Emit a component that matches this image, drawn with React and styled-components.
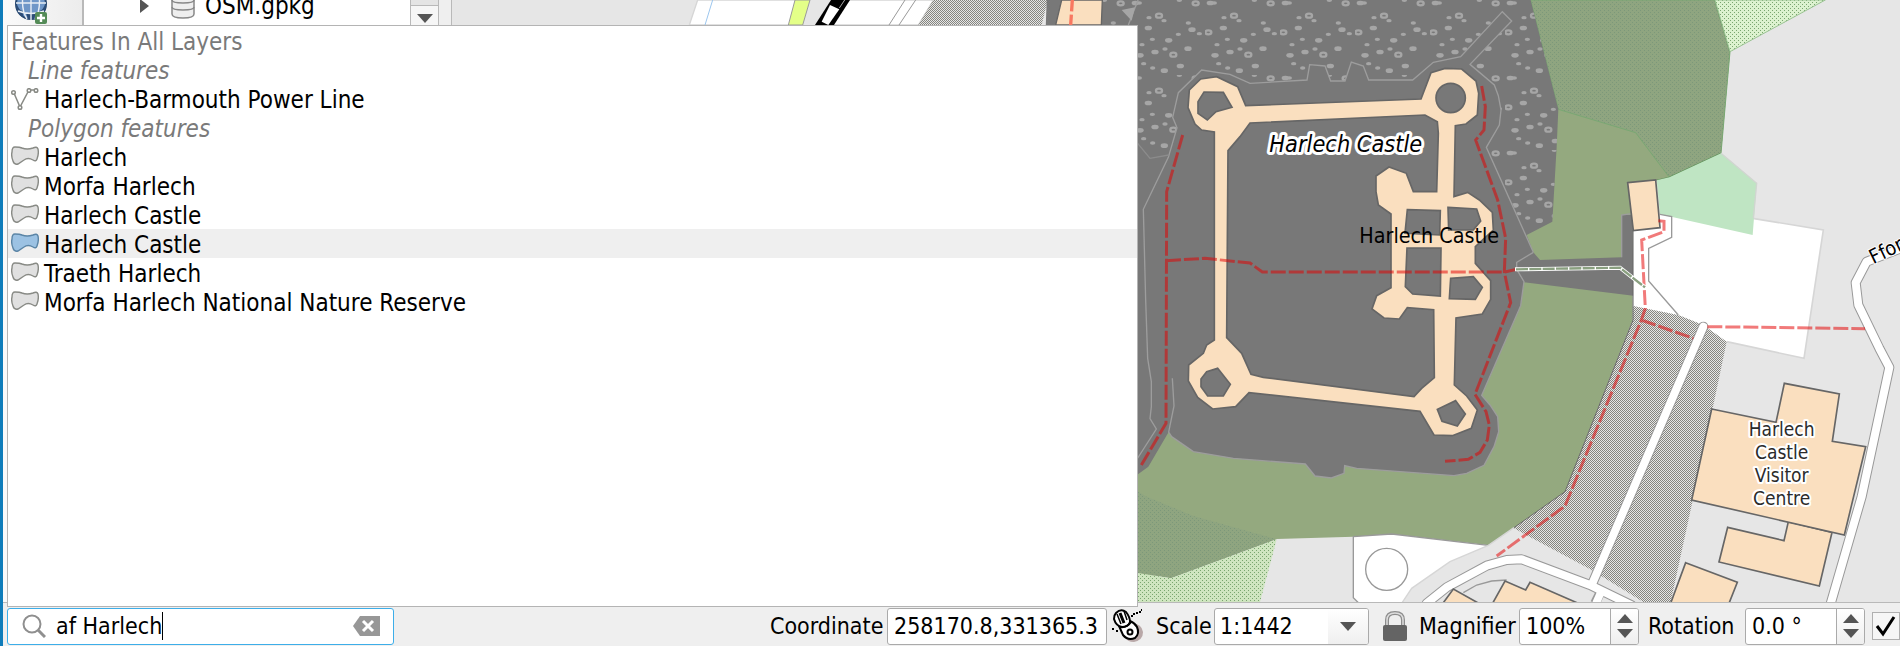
import React from "react";
import styled, { createGlobalStyle, css } from "styled-components";

const GlobalStyle = createGlobalStyle`
  * { box-sizing: border-box; }
  body { margin: 0; background: #efefef; }
  body, button, input, select {
    font-family: "DejaVu Sans Condensed", "DejaVu Sans", sans-serif;
    font-stretch: condensed;
    font-size: 23px;
    color: #000;
  }
`;

const Window = styled.div`
  position: relative;
  display: flex;
  flex-direction: column;
  height: 100vh;
  overflow: hidden;
  border-left: 3px solid #0f7cba;
  background: #efefef;
`;

const Workspace = styled.div`
  display: flex;
  flex: 1;
  min-height: 0;
`;

const ToolStrip = styled.nav`
  flex: 0 0 81px;
  border-right: 2px solid #b9b9b9;
  background: linear-gradient(90deg, #fafafa, #ececec);
  padding-left: 12px;
  overflow: hidden;
`;

const IconButton = styled.button`
  display: flex;
  align-items: center;
  justify-content: center;
  padding: 0;
  border: 0;
  background: none;
`;

const ToolButton = styled(IconButton)`
  width: 34px;
  height: 34px;
  margin-top: -10px;
`;

const LayerTree = styled.section`
  flex: 0 0 326px;
  background: #fff;
  overflow: hidden;
`;

const TreeRow = styled.div`
  display: flex;
  align-items: center;
  gap: 10px;
  height: 32px;
  margin-top: -10px;
  padding-left: 55px;
  font-size: 24px;
`;

const Expander = styled(IconButton)`
  width: 10px;
  height: 14px;
  margin-right: 12px;
`;

const ScrollTrack = styled.div`
  flex: 0 0 29px;
  border: solid #b9b9b9;
  border-width: 0 1px;
  background: #f6f6f6;
`;

const ScrollThumb = styled.div`
  height: 6px;
  border-bottom: 1px solid #b9b9b9;
  background: #e4e4e4;
`;

const ScrollButton = styled(IconButton)`
  width: 100%;
  height: 24px;
`;

const Splitter = styled.div`
  flex: 0 0 13px;
  border-right: 1px solid #b9b9b9;
`;

const MapPane = styled.main`
  flex: 1;
  min-width: 0;
  background: #e6e6e6;
  svg { display: block; width: 100%; height: 100%; }
`;

const Popup = styled.ul`
  position: absolute;
  top: 25px;
  bottom: 39px;
  left: 4px;
  width: calc(60% - 7px);
  margin: 0;
  padding: 0;
  list-style: none;
  border: 1px solid #b4b4b4;
  background: #fff;
  font-size: 24px;
`;

const ResultRow = styled.li`
  display: flex;
  align-items: center;
  gap: 5px;
  height: 29px;
  padding: 2px 0 0 3px;
  white-space: nowrap;
  background: ${(p) => (p.$selected ? "#efefef" : "transparent")};
  ${(p) => p.$kind === "title" && css`color: #7a7a7a;`}
  ${(p) => p.$kind === "group" && css`
    color: #7a7a7a;
    font-style: italic;
    padding-left: 20px;
  `}
`;

const StatusBar = styled.footer`
  display: flex;
  align-items: center;
  flex: 0 0 44px;
  padding: 4px 0 1px 4px;
  border-top: 1px solid #b9b9b9;
  white-space: nowrap;
`;

const Field = styled.div`
  display: flex;
  align-items: center;
  flex: 0 0 ${(p) => p.$width}px;
  height: 37px;
  margin-right: ${(p) => p.$gap || 0}px;
  overflow: hidden;
  border: 1px solid ${(p) => (p.$active ? "#3daee9" : "#aaa")};
  border-radius: 3px;
  background: #fff;
`;

const TextInput = styled.input`
  flex: 1;
  min-width: 0;
  height: 100%;
  padding: 0 0 0 6px;
  border: 0;
  outline: 0;
  background: none;
`;

const SearchInput = styled(TextInput)`
  flex: 0 1 auto;
  field-sizing: content;
  padding: 0;
  margin-left: 10px;
  caret-color: transparent;
`;

const Caret = styled.span`
  width: 1px;
  height: 28px;
  background: #000;
`;

const SearchIcon = styled.svg`
  flex: 0 0 24px;
  margin-left: 14px;
`;

const ClearButton = styled(IconButton)`
  margin: 0 13px 0 auto;
`;

const Spacer = styled.div`
  flex: 1;
`;

const Label = styled.label`
  flex: 0 0 ${(p) => p.$width}px;
`;

const MouseButton = styled(IconButton)`
  flex: 0 0 34px;
  margin-right: 10px;
`;

const LockButton = styled(IconButton)`
  flex: 0 0 24px;
  margin: 0 12px 0 14px;
`;

const ScaleSelect = styled.select`
  flex: 1;
  height: 100%;
  padding: 0 0 0 5px;
  border: 0;
  outline: 0;
  appearance: none;
  background: none;
`;

const DropArrow = styled.span`
  display: flex;
  align-items: center;
  justify-content: center;
  width: 40px;
  height: 100%;
  margin-left: -40px;
  background: linear-gradient(#fff, #efefef);
  pointer-events: none;
`;

const Stepper = styled.div`
  display: flex;
  flex-direction: column;
  justify-content: center;
  gap: 6px;
  flex: 0 0 28px;
  height: 100%;
  border-left: 1px solid #aaa;
  background: linear-gradient(#fff, #efefef);
`;

const CheckLabel = styled.label`
  display: grid;
  flex: 0 0 29px;
  > * { grid-area: 1 / 1; place-self: center; }
  svg { pointer-events: none; }
`;

const CheckInput = styled.input`
  width: 28px;
  height: 28px;
  margin: 0;
  appearance: none;
  border: 1px solid #b0b0b0;
  background: #f6f6f6;
`;

const Triangle = ({ dir = "down", w = 16, h = 9 }) => {
  const d = {
    down: `M0 0H${w}L${w / 2} ${h}Z`,
    up: `M0 ${h}H${w}L${w / 2} 0Z`,
    right: `M0 0L${w} ${h / 2}L0 ${h}Z`,
  }[dir];
  return (
    <svg width={w} height={h} aria-hidden="true">
      <path d={d} fill="#555" />
    </svg>
  );
};

const GlobeIcon = () => (
  <svg width="34" height="34" viewBox="0 0 34 34" aria-hidden="true">
    <circle cx="16" cy="14" r="15" fill="#6f97c8" stroke="#27476f" strokeWidth="2" />
    <path d="M1 12Q4 21 8 21Q7 26 11 29Q3 26 1 17ZM31 12Q28 21 24 21Q25 26 21 29Q29 26 31 17ZM11 23Q16 25 21 23L19 29H13Z" fill="#2c4d78" />
    <path d="M1 13H31M3 21Q16 26 29 21M16 0V30M8 4Q6 20 12 29M24 4Q26 20 20 29" fill="none" stroke="#e8eef5" strokeWidth="1.400" />
    <rect x="20" y="22" width="12" height="12" rx="2" fill="#548b57" />
    <path d="M26 24V32M22 28H30" stroke="#fff" strokeWidth="2.400" />
  </svg>
);

const DatabaseIcon = () => (
  <svg width="24" height="32" viewBox="0 0 24 32" aria-hidden="true">
    <path d="M1 5V24Q1 28 12 28T23 24V5Z" fill="#eee" stroke="#888" strokeWidth="1.500" />
    <ellipse cx="12" cy="5" rx="11" ry="4" fill="#f5f5f5" stroke="#888" strokeWidth="1.500" />
    <path d="M1 10Q1 13 12 13T23 10M1 17Q1 20 12 20T23 17" fill="none" stroke="#888" strokeWidth="1.500" />
  </svg>
);

const LineIcon = () => (
  <svg width="28" height="24" viewBox="0 0 28 24" aria-hidden="true">
    <g fill="#fff" stroke="#888a85" strokeWidth="1.500">
      <path d="M2.500 4L9 19L18 2H25" fill="none" />
      <circle cx="2.500" cy="4.500" r="1.800" />
      <circle cx="9" cy="19.500" r="1.800" />
      <circle cx="18" cy="2.500" r="1.800" />
      <circle cx="25" cy="2.500" r="1.800" />
    </g>
  </svg>
);

const PolygonIcon = ({ blue }) => (
  <svg width="28" height="24" viewBox="0 0 28 24" aria-hidden="true">
    <path
      d="M1 6Q1 1 4 1Q9 1 11 2Q16 4 22 2Q26 0 27 3Q28 8 26 13Q25 16 22 14Q17 11 13 14L7 18Q3 19 2 15Q0 10 1 6Z"
      fill={blue ? "#9cc2e3" : "#e0e0e0"}
      stroke={blue ? "#5b85a6" : "#888a85"}
      strokeWidth="1.400"
    />
  </svg>
);

const MouseIcon = () => (
  <svg width="34" height="34" viewBox="0 0 34 34" aria-hidden="true">
    <path d="M20 14Q30 15 31 23Q31 31 22 33Q15 33 13 28Z" fill="#b9a8a8" />
    <g stroke="#000" strokeWidth="2" fill="#fff">
      <path d="M7 17L11 26Q16 32 23 29Q28 25 25 18Q23 14 18 12Z" />
      <path d="M4 4Q9 -1 14 3Q18 8 18 13Q16 18 10 18Q4 17 2 10Q2 6 4 4Z" />
      <path d="M8 18Q15 19 19 13" fill="none" />
      <circle cx="18" cy="23" r="2.500" />
    </g>
    <path d="M5 5L9 15M12 2L15 11" stroke="#000" strokeWidth="1.500" />
    <path d="M8 4L12 14" stroke="#000" strokeWidth="3" />
    <path d="M19 7H22V5H25V3H28V1H30M0 20H2M4 22H6" stroke="#000" strokeWidth="2" strokeDasharray="2 2" fill="none" />
  </svg>
);

const LockIcon = () => (
  <svg width="24" height="30" viewBox="0 0 24 30" aria-hidden="true">
    <path d="M4 15V9Q4 2 12 2T20 9V15" fill="none" stroke="#8d8d8d" strokeWidth="4" />
    <path d="M4 15V9Q4 2 12 2T20 9V15" fill="none" stroke="#dedede" strokeWidth="1.500" />
    <rect x="0" y="14" width="24" height="16" rx="2" fill="#646464" />
  </svg>
);

/* Pebbles of the scree pattern: x, y, size (0 small, 1 medium, 2 ring). */
const PEBBLES = [
  [57, 53, 0], [87, 47, 2], [102, 62, 0], [55, 84, 1], [145, 103, 0], [175, 69, 0],
  [186, 89, 1], [208, 101, 0], [10, 97, 2], [67, 118, 0], [116, 121, 1], [36, 134, 0],
  [75, 156, 1], [105, 147, 0], [130, 164, 2], [174, 146, 1], [41, 191, 0], [103, 212, 1],
  [151, 198, 1], [68, 204, 0], [30, 166, 1], [197, 10, 2], [16, 9, 1], [148, 1, 0], [28, 9, 0],
];

const Pebble = ({ x, y, size }) =>
  size === 2 ? (
    <ellipse cx={x} cy={y} rx="9" ry="6" fill="none" stroke="#a6a6a6" strokeWidth="7" />
  ) : (
    <ellipse cx={x} cy={y} rx={size ? 11 : 8} ry={size ? 7 : 5} fill="#a6a6a6" />
  );

const WALLS =
  "M178 270L212 237L260 230L323 260L347 317L873 297L903 218L945 205L995 207L1038 243L1046 280L1042 345L1008 372L976 377L972 590L1013 577L1048 600L1087 637L1090 690L1036 740L1036 790L1082 842V898L1057 942L978 954L973 1155L1010 1188L1042 1230L1024 1285L967 1307L912 1305L870 1234L357 1178L317 1220L248 1227L203 1192L175 1143L176 1095L220 1060L230 1035L253 1020V396L215 390L195 372L174 323Z" +
  "M360 369L885 345L922 365L925 400L920 575H850L829 520L777 501L738 528V575L745 615L783 642V863L740 887L726 927L762 954L808 957L832 923L911 929L913 1133L875 1165L852 1190L400 1132L363 1123L335 1060L290 1013L294 452L330 410Z" +
  "M222 276L280 277L306 322L258 335L232 360L204 340V305Z" +
  "M1006 294A44 44 0 1 0 918 294A44 44 0 1 0 1006 294Z" +
  "M832 629L931 632L929 705L825 700Z" +
  "M954 622L1040 627L1052 663L1030 690H956Z" +
  "M831 744H933L931 888L848 882L826 860Z" +
  "M962 835L1030 830L1057 862L1036 898L958 896Z" +
  "M263 1105L301 1153L280 1188H233L213 1160V1137L230 1115Z" +
  "M977 1202L1006 1242L982 1278L936 1264L922 1228Z";

const ROADS = [
  "M890 1810L950 1762L1070 1697L1130 1680L1175 1678L1380 1755L1505 1816",
  "M1720 980L1385 1755",
  "M2330 738L2210 785L2177 848L2185 915L2248 1045L2278 1102L2195 1490L2100 1818",
];

const FOOTPATHS =
  "M158 405L110 575L108 1270L30 1402M108 782L225 775L360 789L397 816H1125L1160 808M1055 258L1066 320L1062 390L1037 420L1103 600L1127 715L1123 816L1142 908L1035 1183L1068 1235L1078 1275L1072 1320L1050 1357L1015 1378L945 1384M1585 662L1602 664V695L1535 720L1546 925L1534 960L1305 1518L1100 1668M1534 960L1690 1015M1732 980L2205 986";

const MapText = styled.text`
  font-family: "DejaVu Sans Condensed", "DejaVu Sans", sans-serif;
  font-stretch: condensed;
  font-size: ${(p) => p.$size}px;
  font-style: ${(p) => (p.$italic ? "italic" : "normal")};
  text-anchor: ${(p) => p.$anchor || "start"};
  fill: ${(p) => p.$fill || "#000"};
  ${(p) => p.$halo && css`
    stroke: #fff;
    stroke-width: ${p.$halo}px;
    stroke-linejoin: round;
    paint-order: stroke;
  `}
`;

/* Map units are a third of a screen pixel. */
const MapCanvas = () => (
  <svg viewBox="-2034 0 4344 1806" preserveAspectRatio="xMaxYMin slice" role="img" aria-label="Map of Harlech Castle">
    <defs>
      <pattern id="scree" width="225" height="225" patternUnits="userSpaceOnUse">
        {PEBBLES.map(([x, y, size]) => <Pebble key={`${x}-${y}`} x={x} y={y} size={size} />)}
      </pattern>
      <pattern id="stipple" width="6" height="6" patternUnits="userSpaceOnUse">
        <path d="M0 0H3V3H0ZM3 3H6V6H3Z" fill="#85857f" />
      </pattern>
      <pattern id="dots" width="12" height="12" patternUnits="userSpaceOnUse">
        <path d="M0 0H3V3H0ZM6 6H9V9H6Z" fill="#79a56f" />
      </pattern>
      <pattern id="darkDots" width="12" height="12" patternUnits="userSpaceOnUse">
        <path d="M0 0H3V3H0ZM6 6H9V9H6Z" fill="#7c987a" />
      </pattern>
    </defs>

    <rect x="-2034" width="4344" height="1806" fill="#e6e6e6" />

    <g>
      <path d="M-1297 0H-590L-635 75H-1322Z" fill="#fff" stroke="#d6d6d6" strokeWidth="4" />
      <path d="M-1252 0L-1275 75" stroke="#9cc6ee" strokeWidth="3" />
      <path d="M-960 0H-890L-935 75H-982Z" fill="#e6e6e6" />
      <path d="M-1005 0H-960L-982 75H-1025Z" fill="#e4ff88" stroke="#999" strokeWidth="3" />
      <path d="M-897 0H-840L-888 75H-945Z" />
      <path d="M-900 15L-872 28L-905 75L-925 65Z" fill="#fff" />
      <path d="M-856 0L-872 24" stroke="#fff" strokeWidth="2" />
      <path d="M-675 0L-723 75M-643 0L-693 75" stroke="#999" strokeWidth="3" />
      <path d="M-590 0H-247L-265 75H-635Z" fill="url(#stipple)" />
    </g>

    <path d="M1202 0H1755L1800 155L1773 460L1618 532L1580 541L1493 548L1507 645L1508 960L1305 1475L1152 1583L1075 1636L785 1602L670 1610L440 1617L0 1750V1250H1050V700Z" fill="#94a97f" />
    <path d="M1202 0H1755L1800 155L1773 460L1618 532L1517 398L1285 328Z" fill="#8fa580" />
    <path d="M1202 0H1755L1800 155L1773 460L1618 532L1517 398L1285 328Z" fill="url(#darkDots)" stroke="#7aa873" strokeWidth="3" />
    <path d="M1755 0L1800 155M1773 460L1618 532L1580 541" fill="none" stroke="#5e9057" strokeWidth="4" />
    <path d="M1755 0H2086L1800 155Z" fill="#dcf2cf" />
    <path d="M1755 0H2086L1800 155Z" fill="url(#dots)" stroke="#9cc495" strokeWidth="3" />

    <path d="M-250 0H1202L1285 328L1280 440L1267 665L1190 705L1210 757L1230 780L1475 772V645H1508L1510 887L1182 847L1172 917L1055 1186L1080 1215L1103 1250L1106 1295L1092 1340L1062 1396L1010 1420L972 1427L680 1405L644 1397L642 1420L604 1434L555 1428L526 1392L310 1375L190 1355L125 1310L116 1296L55 1400L0 1440H-300Z" fill="#787878" />
    <path d="M-83 0H1202L1285 328L1280 440L1267 665L1190 705L1069 442L1108 375L1113 330L1105 287L1093 255L1020 193L1145 63L1117 35L992 170L910 187L848 240H716L700 198L664 186L645 243H602L585 198L539 194L531 240L360 250L300 223L215 210L145 278L128 352L141 383L115 465L60 475L23 430L-83 400Z" fill="url(#scree)" />
    <g fill="none" stroke="#9d9d9d" strokeWidth="4">
      <path d="M1475 772V645L1508 640M1210 757L1069 442L1108 375L1113 330L1105 287L1093 255L1020 193L1145 63L1117 35L992 170L910 187L848 240H716L700 198L664 186L645 243H602L585 198L539 194L531 240L360 250L300 223L215 210L145 278L128 352L141 383L115 472L40 628L47 900L53 1075L64 1145V1220L60 1256L79 1287L0 1410" />
      <path d="M1210 757L1160 787V808L1182 845L1172 917L1055 1186L1080 1215L1103 1250L1106 1295L1092 1340L1062 1396L1010 1420L972 1427L680 1405L644 1397L642 1420L604 1434L555 1428L526 1392L310 1375L190 1355L125 1310L116 1296L132 1218L127 1135" />
      <path d="M116 465L60 475L23 430" stroke="#8c8c8c" />
      <path d="M28 -10L-5 75" />
    </g>
    <path d="M-25 30L15 22L5 62Z" fill="#a6a6a6" />
    <path d="M-205 0H-83L-86 75H-223Z" fill="#fadfbf" stroke="#666" strokeWidth="4" />
    <path d="M-173 0L-178 75" stroke="#f87861" strokeWidth="10" strokeDasharray="34 10" />

    <path d="M0 1460L50 1490L190 1548L440 1618L123 1735L0 1715Z" fill="#8fa580" />
    <path d="M0 1460L50 1490L190 1548L440 1618L123 1735L0 1715Z" fill="url(#darkDots)" />
    <path d="M0 1715L123 1735L440 1618L390 1806H0Z" fill="#cfe5c0" />
    <path d="M0 1715L123 1735L440 1618L390 1806H0Z" fill="url(#dots)" />

    <path d="M1510 690L1590 645L1868 655L2080 690L2022 1075L1790 1025L1510 950Z" fill="#fff" />
    <path d="M1868 655L2080 690L2022 1075L1790 1025" fill="none" stroke="#d6d6d6" strokeWidth="5" />
    <path d="M1580 541L1618 532L1773 460L1880 550L1868 705L1590 643Z" fill="#bfe5c3" />
    <path d="M1773 460L1880 550L1870 655" fill="none" stroke="#d0d6d0" strokeWidth="4" />
    <path d="M1590 643L1625 650V712L1556 745V843L1645 945" fill="none" stroke="#999" strokeWidth="4" />
    <path d="M1510 918L1645 945L1720 975L1790 1025L1748 1225L1622 1806H1540L1385 1710L1152 1585L1305 1475L1508 960Z" fill="#e6e6e6" />
    <path d="M1510 918L1645 945L1720 975L1790 1025L1748 1225L1622 1806H1540L1385 1710L1152 1585L1305 1475L1508 960Z" fill="url(#stipple)" />
    <path d="M1509 690V960L1305 1475L1152 1583" fill="none" stroke="#666" strokeWidth="3" />

    <path d="M670 1610L785 1602L1075 1636L960 1685L845 1765L815 1810H685L670 1793Z" fill="#fff" />
    <path d="M685 1808L670 1793V1610L785 1602L1075 1636" fill="none" stroke="#999" strokeWidth="4" />
    <path d="M1152 1583L1075 1636L960 1685L845 1765L815 1810" fill="none" stroke="#d6d6d6" strokeWidth="4" />
    <circle cx="770" cy="1708" r="63" fill="#fff" stroke="#999" strokeWidth="4" />
    <path d="M1000 1778L1040 1755L1085 1743L1130 1740" fill="none" stroke="#999" strokeWidth="4" />
    <path d="M1415 1770L1395 1810" stroke="#999" strokeWidth="29" />

    <g fill="none" strokeLinecap="round" strokeLinejoin="round">
      {ROADS.map((d) => <path key={d} d={d} stroke="#999" strokeWidth="30" />)}
      {ROADS.map((d) => <path key={d} d={d} stroke="#fff" strokeWidth="24" />)}
    </g>
    <path d="M1418 1765L1398 1810" stroke="#fff" strokeWidth="23" />

    <g fill="#fadfbf" stroke="#666" strokeWidth="5">
      <path d={WALLS} fillRule="evenodd" />
      <path d="M1493 548L1577 540L1590 683L1510 692Z" />
      <path d="M1793 1582L1962 1622L1975 1565L2106 1597L2068 1758L1767 1686Z" />
      <path d="M1745 1227L1938 1267L1963 1150L2128 1182L2107 1324L2207 1340L2143 1605L1685 1500Z" />
      <path d="M1667 1688L1822 1747L1795 1815H1620Z" />
      <path d="M1085 1815L1125 1743L1187 1770L1200 1747L1345 1810Z" />
      <path d="M935 1815L970 1767L1050 1812Z" />
    </g>

    <path d={FOOTPATHS} fill="none" stroke="#e40000" strokeOpacity="0.52" strokeWidth="9" strokeDasharray="45 9" />
    <path d="M1155 808L1470 803L1545 862" fill="none" stroke="#fff" strokeWidth="12" />
    <path d="M1158 808L1470 803L1545 862" fill="none" stroke="#8aa080" strokeWidth="7" strokeDasharray="36 4" />

    <MapText x="418" y="457" $size="70" $italic $halo="18">Harlech Castle</MapText>
    <MapText x="688" y="728" $size="64">Harlech Castle</MapText>
    <MapText $size="57" $anchor="middle" $fill="#2b2b2b" $halo="12">
      {["Harlech", "Castle", "Visitor", "Centre"].map((word, i) => (
        <tspan key={word} x="1955" y={1307 + i * 69}>{word}</tspan>
      ))}
    </MapText>
    <MapText transform="translate(2230 793) rotate(-26)" $size="60" $halo="6">Ffor</MapText>
  </svg>
);

const RESULTS = [
  { kind: "title", text: "Features In All Layers" },
  { kind: "group", text: "Line features" },
  { kind: "line", text: "Harlech-Barmouth Power Line" },
  { kind: "group", text: "Polygon features" },
  { kind: "polygon", text: "Harlech" },
  { kind: "polygon", text: "Morfa Harlech" },
  { kind: "polygon", text: "Harlech Castle" },
  { kind: "polygon", text: "Harlech Castle", selected: true },
  { kind: "polygon", text: "Traeth Harlech" },
  { kind: "polygon", text: "Morfa Harlech National Nature Reserve" },
];

const SpinBox = ({ id, value, gap }) => (
  <Field $width={120} $gap={gap}>
    <TextInput id={id} defaultValue={value} />
    <Stepper>
      <IconButton type="button" aria-label="Increase"><Triangle dir="up" /></IconButton>
      <IconButton type="button" aria-label="Decrease"><Triangle /></IconButton>
    </Stepper>
  </Field>
);

export default function App() {
  return (
    <Window>
      <GlobalStyle />
      <Workspace>
        <ToolStrip>
          <ToolButton type="button" aria-label="Add web layer"><GlobeIcon /></ToolButton>
        </ToolStrip>
        <LayerTree>
          <TreeRow>
            <Expander type="button" aria-label="Expand"><Triangle dir="right" w={9} h={14} /></Expander>
            <DatabaseIcon />
            <span>OSM.gpkg</span>
          </TreeRow>
        </LayerTree>
        <ScrollTrack>
          <ScrollThumb />
          <ScrollButton type="button" aria-label="Scroll down"><Triangle /></ScrollButton>
        </ScrollTrack>
        <Splitter />
        <MapPane><MapCanvas /></MapPane>
      </Workspace>

      <StatusBar>
        <Field $width={387} $active>
          <SearchIcon width="24" height="24" viewBox="0 0 24 24" aria-hidden="true">
            <circle cx="10" cy="10" r="8.500" fill="none" stroke="#8f8f8f" strokeWidth="2" />
            <path d="M16 16L23 23" stroke="#8f8f8f" strokeWidth="3" />
          </SearchIcon>
          <SearchInput aria-label="Locate" defaultValue="af Harlech" />
          <Caret />
          <ClearButton type="button" aria-label="Clear">
            <svg width="27" height="20" viewBox="0 0 27 20" aria-hidden="true">
              <path d="M0 10L7 0H27V20H7Z" fill="#979797" />
              <path d="M10 5L20 15M20 5L10 15" stroke="#fff" strokeWidth="3" />
            </svg>
          </ClearButton>
        </Field>
        <Spacer />
        <Label htmlFor="coordinate" $width={117}>Coordinate</Label>
        <Field $width={220} $gap={5}><TextInput id="coordinate" defaultValue="258170.8,331365.3" /></Field>
        <MouseButton type="button" aria-label="Toggle extents"><MouseIcon /></MouseButton>
        <Label htmlFor="scale" $width={58}>Scale</Label>
        <Field $width={155}>
          <ScaleSelect id="scale" defaultValue="1:1442"><option>1:1442</option></ScaleSelect>
          <DropArrow><Triangle /></DropArrow>
        </Field>
        <LockButton type="button" aria-label="Lock scale"><LockIcon /></LockButton>
        <Label htmlFor="magnifier" $width={100}>Magnifier</Label>
        <SpinBox id="magnifier" value="100%" gap={9} />
        <Label htmlFor="rotation" $width={97}>Rotation</Label>
        <SpinBox id="rotation" value="0.0 °" gap={6} />
        <CheckLabel>
          <CheckInput type="checkbox" defaultChecked aria-label="Render" />
          <svg width="22" height="22" viewBox="0 0 22 22" aria-hidden="true">
            <path d="M2 11L8 19L19 2" fill="none" stroke="#000" strokeWidth="3" />
          </svg>
        </CheckLabel>
      </StatusBar>

      <Popup role="listbox" aria-label="Search results">
        {RESULTS.map((r, i) => (
          <ResultRow key={i} role="option" aria-selected={!!r.selected} $kind={r.kind} $selected={r.selected}>
            {r.kind === "line" && <LineIcon />}
            {r.kind === "polygon" && <PolygonIcon blue={r.selected} />}
            <span>{r.text}</span>
          </ResultRow>
        ))}
      </Popup>
    </Window>
  );
}
